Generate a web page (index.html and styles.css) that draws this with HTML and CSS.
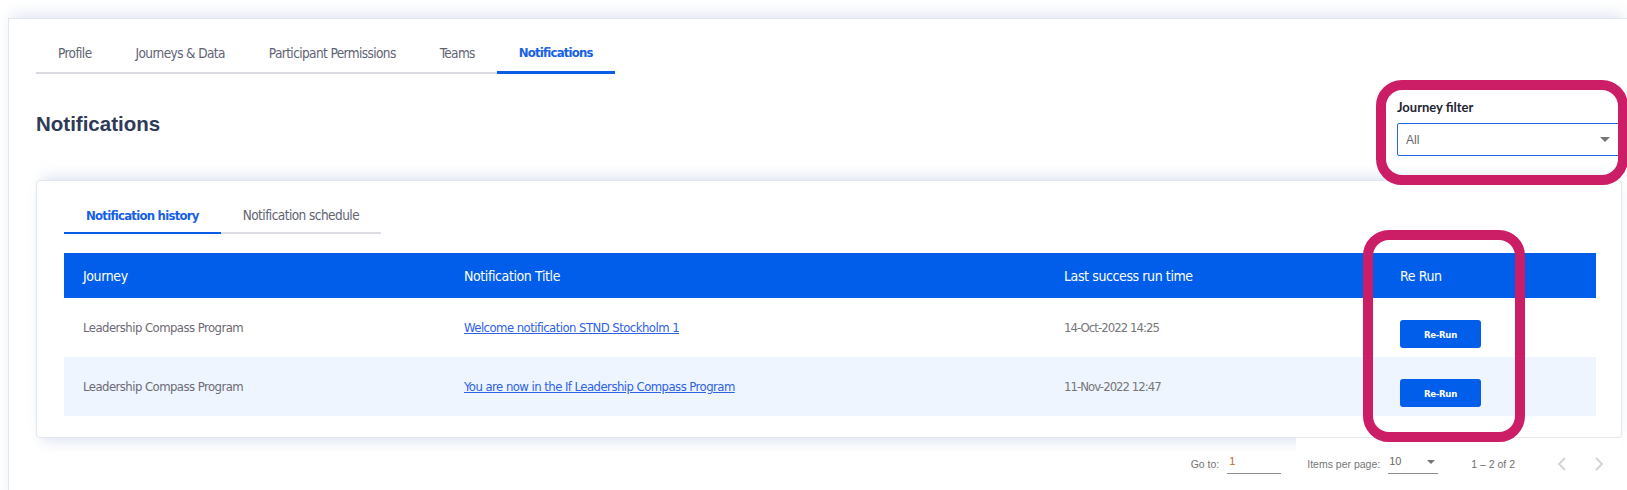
FILE: index.html
```html
<!DOCTYPE html>
<html lang="en">
<head>
<meta charset="utf-8">
<title>Notifications</title>
<link rel="stylesheet" href="styles.css">
</head>
<body>
<div class="page">
  <nav class="tabs">
    <a class="tab">Profile</a>
    <a class="tab">Journeys &amp; Data</a>
    <a class="tab">Participant Permissions</a>
    <a class="tab">Teams</a>
    <a class="tab active">Notifications</a>
  </nav>

  <div class="head">
    <h1 class="title">Notifications</h1>
    <div class="filter">
      <label class="filter-label">Journey filter</label>
      <div class="select">
        <span class="select-value">All</span>
        <span class="caret"></span>
      </div>
    </div>
  </div>

  <section class="card">
    <div class="subtabs">
      <a class="subtab active">Notification history</a>
      <a class="subtab">Notification schedule</a>
    </div>
    <table class="grid">
      <colgroup>
        <col class="c1"><col class="c2"><col class="c3"><col class="c4">
      </colgroup>
      <thead>
        <tr>
          <th>Journey</th>
          <th>Notification Title</th>
          <th>Last success run time</th>
          <th>Re Run</th>
        </tr>
      </thead>
      <tbody>
        <tr>
          <td class="muted">Leadership Compass Program</td>
          <td><a class="link">Welcome notification STND Stockholm 1</a></td>
          <td class="date">14-Oct-2022 14:25</td>
          <td class="act"><button class="btn">Re-Run</button></td>
        </tr>
        <tr class="alt">
          <td class="muted">Leadership Compass Program</td>
          <td><a class="link">You are now in the If Leadership Compass Program</a></td>
          <td class="date">11-Nov-2022 12:47</td>
          <td class="act"><button class="btn">Re-Run</button></td>
        </tr>
      </tbody>
    </table>
  </section>

  <div class="pager">
    <div class="goto">
      <span class="pg-label">Go to:</span>
      <span class="pg-input">1</span>
    </div>
    <div class="ipp">
      <span class="pg-label">Items per page:</span>
      <span class="pg-select"><span>10</span><span class="pg-caret"></span></span>
      <span class="pg-range">1 – 2 of 2</span>
      <span class="pg-nav">
        <svg width="10" height="14" viewBox="0 0 10 14"><polyline points="8,1 2,7 8,13" fill="none" stroke="#d4d4d4" stroke-width="2"/></svg>
      </span>
      <span class="pg-nav">
        <svg width="10" height="14" viewBox="0 0 10 14"><polyline points="2,1 8,7 2,13" fill="none" stroke="#d4d4d4" stroke-width="2"/></svg>
      </span>
    </div>
  </div>
</div>

<div class="mark mark-filter"></div>
<div class="mark mark-rerun"></div>
</body>
</html>
```

FILE: styles.css
```css
html, body {
  margin: 0;
  height: 490px;
  overflow: hidden;
}
body {
  padding: 18px 0 0 8px;
  box-sizing: border-box;
  background: #ffffff;
  font-family: "Liberation Sans", Arial, sans-serif;
  position: relative;
}

.tabs,
.subtabs,
.grid,
.btn {
  font-family: "DejaVu Sans Condensed", "DejaVu Sans", sans-serif;
  font-stretch: condensed;
}

.page {
  background: #fff;
  border-left: 1px solid #e3e6ee;
  border-top: 1px solid #e3e6ee;
  padding: 15px 5px 0 27px;
  min-height: 480px;
  box-shadow: 0 -8px 14px -4px rgba(214, 221, 238, 0.7);
}

/* top tabs */
.tabs {
  display: flex;
  width: max-content;
  border-bottom: 2px solid #d9dbe0;
  font-size: 13.5px;
  letter-spacing: -0.6px;
}
.tab {
  display: flex;
  align-items: center;
  height: 38px;
  padding: 0 22px;
  margin-bottom: -2px;
  border-bottom: 2px solid transparent;
  color: #5e6374;
  cursor: pointer;
}
.tab.active {
  color: #1660e6;
  font-weight: bold;
  font-size: 13px;
  letter-spacing: -0.8px;
  height: 37px;
  border-bottom: 3px solid #0a5ce8;
}

/* heading + filter */
.head {
  display: flex;
  justify-content: space-between;
  align-items: flex-start;
  margin-top: 25px;
}
.title {
  margin: 13px 0 0;
  font-size: 20.5px;
  line-height: 24px;
  font-weight: bold;
  color: #2f3958;
}
.filter {
  display: flex;
  flex-direction: column;
  width: 225px;
}
.filter-label {
  font-family: Lato, "Liberation Sans", sans-serif;
  font-weight: bold;
  font-size: 13px;
  line-height: 16px;
  color: #1f2433;
}
.select {
  margin-top: 8px;
  height: 33px;
  box-sizing: border-box;
  border: 1px solid #2468e4;
  border-radius: 2px;
  display: flex;
  align-items: center;
  justify-content: space-between;
  padding: 0 11px 0 8px;
}
.select-value {
  font-size: 12px;
  color: #666;
}
.caret {
  width: 0;
  height: 0;
  border-left: 5px solid transparent;
  border-right: 5px solid transparent;
  border-top: 5px solid #757575;
}

/* card */
.card {
  margin-top: 24px;
  border: 1px solid #e2e6ef;
  border-radius: 4px;
  padding: 17px 25px 21px 27px;
  background: #fff;
  box-shadow: 0 -10px 12px -6px rgba(214, 221, 238, 0.75),
              0 10px 12px -6px rgba(214, 221, 238, 0.75);
}
.subtabs {
  display: flex;
  width: max-content;
  border-bottom: 2px solid #dcdee3;
  font-size: 13.5px;
  letter-spacing: -0.55px;
}
.subtab {
  display: flex;
  align-items: center;
  height: 34px;
  padding: 0 22px;
  margin-bottom: -2px;
  border-bottom: 2px solid transparent;
  color: #5e6374;
}
.subtab.active {
  color: #1660e6;
  font-weight: bold;
  font-size: 13px;
  letter-spacing: -0.75px;
  border-bottom-color: #0a5ce8;
}

.grid {
  margin-top: 19px;
  width: 100%;
  border-collapse: collapse;
  table-layout: fixed;
}
.c1 { width: 381px; }
.c2 { width: 600px; }
.c3 { width: 336px; }
.c4 { width: 215px; }
.grid th {
  height: 45px;
  padding: 0 19px;
  background: #005eea;
  color: #fff;
  font-weight: normal;
  font-size: 14px;
  letter-spacing: -0.4px;
  text-align: left;
}
.grid td {
  height: 59px;
  padding: 0 19px;
  font-size: 13px;
  letter-spacing: -0.55px;
  vertical-align: middle;
}
.grid tr.alt td {
  background: #eef5fe;
}
.muted { color: #6d6a74; }
.grid td.date {
  color: #767679;
  letter-spacing: -0.95px;
}
.link {
  color: #2e62e6;
  text-decoration: underline;
  cursor: pointer;
}
.grid td.act {
  vertical-align: top;
  padding-top: 22px;
  box-sizing: border-box;
}
.btn {
  width: 81px;
  height: 28px;
  border: 0;
  border-radius: 3px;
  background: #005eea;
  color: #fff;
  font-weight: bold;
  font-size: 9.5px;
  letter-spacing: -0.3px;
  padding: 0;
}

/* pager */
.pager {
  display: flex;
  justify-content: flex-end;
  align-items: stretch;
  height: 52px;
  font-size: 10.5px;
  color: #757575;
}
.goto {
  display: flex;
  align-items: center;
  gap: 8px;
  padding-right: 15px;
}
.pg-input {
  width: 54px;
  height: 20px;
  box-sizing: border-box;
  border-bottom: 1px solid #8c8c8c;
  color: #b7712a;
  font-size: 11px;
  line-height: 14px;
  padding-left: 2px;
}
.ipp {
  display: flex;
  align-items: center;
  background: #fff;
  padding: 0 18px 0 11px;
}
.pg-select {
  margin-left: 8px;
  width: 50px;
  height: 20px;
  box-sizing: border-box;
  border-bottom: 1px solid #8c8c8c;
  display: flex;
  justify-content: space-between;
  align-items: flex-start;
  font-size: 11px;
  line-height: 14px;
  color: #6a6a6a;
  padding: 0 3px 0 1px;
}
.pg-caret {
  margin-top: 6px;
  width: 0;
  height: 0;
  border-left: 4px solid transparent;
  border-right: 4px solid transparent;
  border-top: 4px solid #757575;
}
.pg-range {
  margin-left: 33px;
  color: #707070;
}
.pg-nav {
  display: flex;
  margin-left: 42px;
}
.pg-nav + .pg-nav {
  margin-left: 27px;
}

/* annotation marks */
.mark {
  position: absolute;
  box-sizing: border-box;
  border: 10px solid #cc1e67;
  border-radius: 26px;
}
.mark-filter {
  left: 1376px;
  top: 80px;
  width: 252px;
  height: 105px;
}
.mark-rerun {
  left: 1363px;
  top: 230px;
  width: 162px;
  height: 212px;
}
```
